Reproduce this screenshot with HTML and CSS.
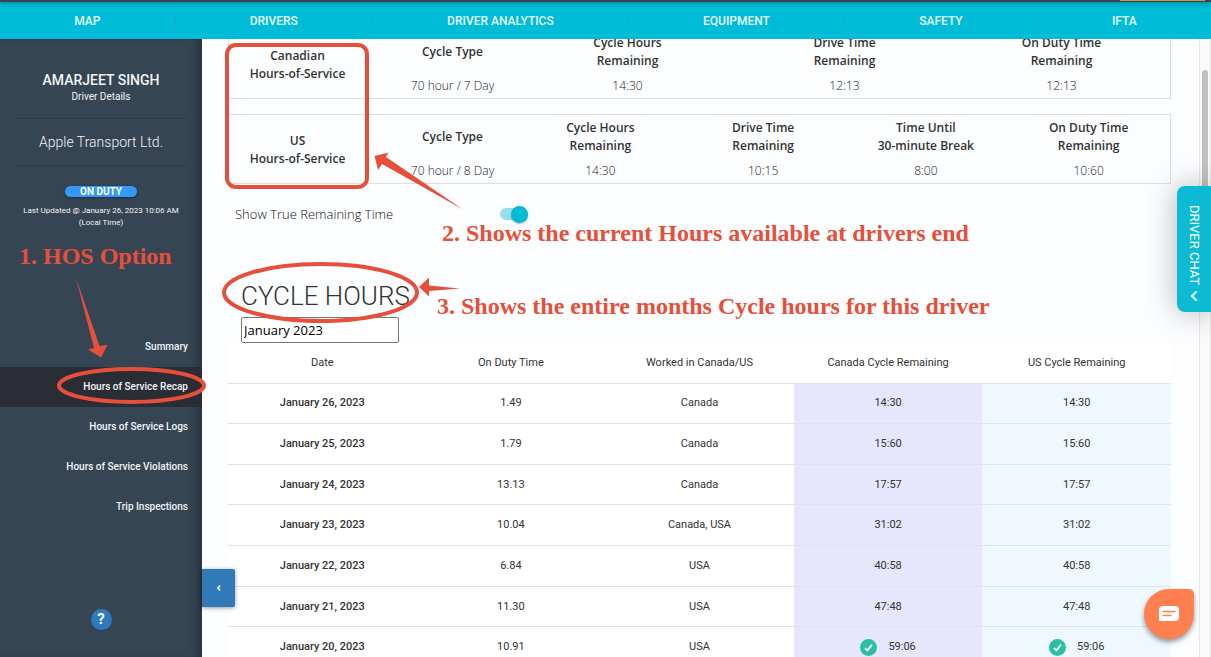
FILE: index.html
```html
<!DOCTYPE html>
<html lang="en">
<head>
<meta charset="utf-8">
<title>Hours of Service Recap</title>
<link rel="stylesheet" href="styles.css">
</head>
<body>
<div class="app">
  <header class="topbar">
    <div class="strip"><span class="strip-tab"></span></div>
    <nav class="topnav" aria-label="Main">
      <a href="#map">MAP</a>
      <a href="#drivers">DRIVERS</a>
      <a href="#analytics">DRIVER ANALYTICS</a>
      <a href="#equipment">EQUIPMENT</a>
      <a href="#safety">SAFETY</a>
      <a href="#ifta">IFTA</a>
    </nav>
  </header>

  <div class="body">
    <aside class="sidebar">
      <div class="driver">
        <h2 class="driver-name">AMARJEET SINGH</h2>
        <a class="driver-link" href="#details">Driver Details</a>
      </div>
      <div class="company">Apple Transport Ltd.</div>
      <div class="status">
        <span class="pill">ON DUTY</span>
        <p class="updated">Last Updated @ January 26, 2023 10:06 AM<br>(Local Time)</p>
      </div>
      <nav class="sidenav" aria-label="Driver">
        <a href="#summary">Summary</a>
        <a class="active" href="#recap">Hours of Service Recap</a>
        <a href="#logs">Hours of Service Logs</a>
        <a href="#violations">Hours of Service Violations</a>
        <a href="#trips">Trip Inspections</a>
      </nav>
      <button class="help" type="button" aria-label="Help">?</button>
      <button class="collapse" type="button" aria-label="Collapse sidebar">
        <svg viewBox="0 0 8 8" width="8" height="8"><path d="M5.2 1.6 2.8 4l2.4 2.4" fill="none" stroke="#fff" stroke-width="1.4"/></svg>
      </button>
    </aside>

    <main class="content">
      <section class="card">
        <h3 class="card-title">Canadian<br>Hours-of-Service</h3>
        <dl class="stat type"><dt>Cycle Type</dt><dd>70 hour / 7 Day</dd></dl>
        <dl class="stat"><dt>Cycle Hours<br>Remaining</dt><dd>14:30</dd></dl>
        <dl class="stat"><dt>Drive Time<br>Remaining</dt><dd>12:13</dd></dl>
        <dl class="stat"><dt>On Duty Time<br>Remaining</dt><dd>12:13</dd></dl>
      </section>
      <section class="card">
        <h3 class="card-title">US<br>Hours-of-Service</h3>
        <dl class="stat type"><dt>Cycle Type</dt><dd>70 hour / 8 Day</dd></dl>
        <dl class="stat"><dt>Cycle Hours<br>Remaining</dt><dd>14:30</dd></dl>
        <dl class="stat"><dt>Drive Time<br>Remaining</dt><dd>10:15</dd></dl>
        <dl class="stat"><dt>Time Until<br>30-minute Break</dt><dd>8:00</dd></dl>
        <dl class="stat"><dt>On Duty Time<br>Remaining</dt><dd>10:60</dd></dl>
      </section>

      <div class="switch-row">
        <label for="true-time">Show True Remaining Time</label>
        <input class="switch" id="true-time" type="checkbox" role="switch" checked>
      </div>

      <h1 class="heading">CYCLE HOURS</h1>
      <input class="month" type="text" value="January 2023" aria-label="Month">

      <table class="cycle">
        <thead>
          <tr><th>Date</th><th>On Duty Time</th><th>Worked in Canada/US</th><th>Canada Cycle Remaining</th><th>US Cycle Remaining</th></tr>
        </thead>
        <tbody>
          <tr><th scope="row">January 26, 2023</th><td>1.49</td><td>Canada</td><td class="ca">14:30</td><td class="us">14:30</td></tr>
          <tr><th scope="row">January 25, 2023</th><td>1.79</td><td>Canada</td><td class="ca">15:60</td><td class="us">15:60</td></tr>
          <tr><th scope="row">January 24, 2023</th><td>13.13</td><td>Canada</td><td class="ca">17:57</td><td class="us">17:57</td></tr>
          <tr><th scope="row">January 23, 2023</th><td>10.04</td><td>Canada, USA</td><td class="ca">31:02</td><td class="us">31:02</td></tr>
          <tr><th scope="row">January 22, 2023</th><td>6.84</td><td>USA</td><td class="ca">40:58</td><td class="us">40:58</td></tr>
          <tr><th scope="row">January 21, 2023</th><td>11.30</td><td>USA</td><td class="ca">47:48</td><td class="us">47:48</td></tr>
          <tr>
            <th scope="row">January 20, 2023</th><td>10.91</td><td>USA</td>
            <td class="ca"><span class="reset"><svg viewBox="0 0 17 17" width="17" height="17"><circle cx="8.5" cy="8.5" r="8.5" fill="#2dbfa5"/><path d="m5 9.2 2.4 2.3L12 5.6" fill="none" stroke="#fff" stroke-width="1.8"/></svg>59:06</span></td>
            <td class="us"><span class="reset"><svg viewBox="0 0 17 17" width="17" height="17"><circle cx="8.5" cy="8.5" r="8.5" fill="#2dbfa5"/><path d="m5 9.2 2.4 2.3L12 5.6" fill="none" stroke="#fff" stroke-width="1.8"/></svg>59:06</span></td>
          </tr>
        </tbody>
      </table>
    </main>
    <div class="scrollbar"><div class="thumb"></div></div>
  </div>

  <button class="driver-chat" type="button">DRIVER CHAT
    <svg viewBox="0 0 10 12" width="10" height="12"><path d="M7.6 1.4 3 6l4.6 4.6" fill="none" stroke="#fff" stroke-width="2"/></svg>
  </button>
  <button class="fab" type="button" aria-label="Open messages">
    <svg viewBox="0 0 20 16" width="20" height="16"><path d="M4 0h12a4 4 0 0 1 4 4v7a4 4 0 0 1-4 4H1a1 1 0 0 1-1-1V4a4 4 0 0 1 4-4Z" fill="#fff"/><path d="M4 5.5h12M4 9.5h8" stroke="#ff7f50" stroke-width="1.6" stroke-linecap="round"/></svg>
  </button>

  <div class="notes">
    <svg class="marks" viewBox="0 0 1211 657" width="1211" height="657" aria-hidden="true">
      <g fill="none" stroke="#e6503a" stroke-width="4">
        <rect x="227" y="45" width="140" height="142" rx="9"/>
        <ellipse cx="320.5" cy="292.5" rx="96.5" ry="28.5"/>
        <ellipse cx="131.5" cy="385.5" rx="72.5" ry="16.5"/>
      </g>
      <g fill="#e6503a">
        <path d="M76 278 99.500 346l8-1L101 357.500l-13-8 6-1.500Z"/>
        <path d="M463 209.500 382 164l-4 6L374.500 156l14-3.500-2.500 4.500Z"/>
        <path d="M460 288.500 429 285.500V277.500L419 287l10 9.500V291Z"/>
      </g>
    </svg>
    <span class="note note-option">1. HOS Option</span>
    <span class="note note-current">2. Shows the current Hours available at drivers end</span>
    <span class="note note-month">3. Shows the entire months Cycle hours for this driver</span>
  </div>
</div>
</body>
</html>
```
FILE: styles.css
```css
* { box-sizing: border-box; }

body {
  margin: 0;
  font-family: Roboto, "Liberation Sans", sans-serif;
  color: #333;
}

h1, h2, h3, p, dl, dd { margin: 0; }
a { color: inherit; text-decoration: none; }
button { border: 0; padding: 0; font: inherit; color: #fff; cursor: pointer; }

.app {
  position: relative;
  display: flex;
  flex-direction: column;
  height: 100vh;
  overflow: hidden;
}

/* Top bar */
.topbar { flex: none; background: #00bcd6; }
.strip {
  display: flex;
  justify-content: flex-end;
  height: 2px;
  padding-right: 6px;
  background: #36454f;
  box-shadow: 0 1px 4px rgba(0, 0, 0, 0.5);
}
.strip-tab { width: 85px; height: 1px; background: #b99a5b; }
.topnav { display: flex; height: 37px; align-items: center; }
.topnav a {
  flex: 1 1 auto;
  border-left: 1px solid #17adc2;
  font-size: 12px;
  font-weight: 500;
  line-height: 18px;
  text-align: center;
  color: #e4f8fb;
}
.topnav a:first-child { border-left: 0; }

.body { display: flex; flex: 1; min-height: 0; }

/* Sidebar */
.sidebar {
  position: relative;
  display: flex;
  flex: none;
  flex-direction: column;
  width: 202px;
  background: #364554;
  box-shadow: inset -8px 0 10px -4px rgba(0, 0, 0, 0.3);
  color: #f2f4f5;
  text-align: center;
}
.driver { margin: 0 16px; padding: 32px 0 14px; border-bottom: 1px solid #2f3c49; }
.driver-name { font-size: 14px; font-weight: 500; line-height: 18px; }
.driver-link { display: block; font-size: 10px; line-height: 15px; }
.company {
  margin: 0 16px;
  padding: 13px 0;
  border-bottom: 1px solid #2f3c49;
  font-size: 14px;
  font-weight: 300;
  line-height: 20px;
}
.status { padding-top: 20px; }
.pill {
  display: block;
  width: 72px;
  margin: 0 auto 8px;
  border-radius: 6px;
  background: #3399fe;
  box-shadow: 0 1px 3px rgba(0, 0, 0, 0.4);
  font-size: 10px;
  font-weight: 700;
  line-height: 11px;
  color: #fff;
}
.updated { font-size: 8px; line-height: 12px; }
.sidenav { display: flex; flex-direction: column; margin-top: 98px; }
.sidenav a {
  padding: 10px 14px;
  font-size: 10px;
  font-weight: 500;
  line-height: 20px;
  text-align: right;
}
.sidenav .active { background: #2a2d36; }
.help {
  width: 21px;
  height: 21px;
  margin: auto auto 27px;
  border-radius: 50%;
  background: #2f7abd;
  font-size: 15px;
  font-weight: 700;
  line-height: 21px;
}
.collapse {
  position: absolute;
  left: 100%;
  bottom: 50px;
  z-index: 1;
  display: grid;
  place-items: center;
  width: 33px;
  height: 38px;
  border-radius: 0 2px 2px 0;
  background: #3279b8;
  box-shadow: 0 1px 4px rgba(0, 0, 0, 0.4);
}

/* Content */
.content {
  flex: 1;
  min-width: 0;
  overflow: hidden;
  padding: 0 28px 0 26px;
  background: #fcfdff;
}
.card {
  display: flex;
  margin-bottom: 15px;
  padding: 4px 0 3px;
  border: 1px solid #dcdee0;
  font-family: "Open Sans", sans-serif;
  font-size: 12px;
  line-height: 18px;
  text-align: center;
}
.card:first-child { margin-top: -10px; }
.card-title {
  align-self: center;
  flex: none;
  width: 137px;
  font-size: 12px;
  font-weight: 600;
}
.stat { flex: 1; }
.type { flex: none; width: 133px; margin-left: 20px; }
.stat dt {
  display: grid;
  place-items: center;
  height: 36px;
  font-weight: 600;
}
.stat dd { padding-top: 7px; font-weight: 300; line-height: 18px; color: #222; }

.switch-row {
  display: flex;
  align-items: center;
  gap: 107px;
  margin: 20px 0 0 7px;
  font-family: "Open Sans", sans-serif;
  font-size: 13px;
  font-weight: 300;
  line-height: 20px;
  color: #111;
}
.switch {
  display: flex;
  align-items: center;
  justify-content: flex-end;
  appearance: none;
  width: 28px;
  height: 12px;
  margin: 0;
  border-radius: 6px;
  background: #99dfea;
}
.switch::before {
  content: "";
  width: 17px;
  height: 17px;
  flex: none;
  border-radius: 50%;
  background: #00bcd6;
  box-shadow: 0 1px 2px rgba(0, 0, 0, 0.3);
}

.heading {
  margin: 54px 0 3px 13px;
  font-size: 26px;
  font-weight: 300;
  line-height: 36px;
  color: #333;
}
.month {
  display: block;
  width: 158px;
  height: 26px;
  margin-left: 13px;
  padding: 0 2px;
  border: 1px solid #777;
  border-radius: 2px;
  background: #fff;
  font-family: "Open Sans", sans-serif;
  font-size: 13px;
  color: #000;
}

.cycle {
  width: 100%;
  height: 325px;
  table-layout: fixed;
  border-collapse: collapse;
  background: #fff;
  font-size: 11px;
  line-height: 16px;
  text-align: center;
}
.cycle tr { height: 40px; border-bottom: 1px solid #e2e3e5; }
.cycle th, .cycle td { padding: 0; font-weight: 400; }
.cycle tbody th { font-weight: 500; }
.ca { background: #e6e6fe; }
.us { background: #eff7ff; }
.reset { display: inline-flex; align-items: center; gap: 11px; vertical-align: middle; }

.scrollbar {
  flex: none;
  width: 12px;
  padding: 31px 2px 0;
  border: solid #e6e6e6;
  border-width: 0 1px;
  background: #fafafa;
}
.thumb { height: 120px; border-radius: 3px; background: #c1c1c1; }

/* Floating controls */
.driver-chat {
  position: absolute;
  top: 186px;
  right: 0;
  display: flex;
  align-items: center;
  justify-content: center;
  gap: 5px;
  width: 34px;
  height: 126px;
  padding-top: 9px;
  border-radius: 8px 0 0 8px;
  background: #0cbad3;
  box-shadow: 0 0 30px rgba(0, 0, 0, 0.3);
  font-size: 13px;
  writing-mode: vertical-rl;
}
.fab {
  position: absolute;
  right: 17px;
  bottom: 18px;
  display: grid;
  place-items: center;
  width: 50px;
  height: 50px;
  border-radius: 50% 5px 50% 50%;
  background: #ff7f50;
  box-shadow: 0 3px 5px rgba(0, 0, 0, 0.4);
}

/* Callouts drawn over the page */
.notes { position: absolute; inset: 0; pointer-events: none; }
.marks { position: absolute; top: 0; left: 0; }
.note {
  position: absolute;
  font-family: "Liberation Serif", serif;
  font-size: 24px;
  font-weight: 700;
  line-height: 28px;
  white-space: nowrap;
  color: #e6503a;
}
.note-option { top: 242px; left: 19px; }
.note-current { top: 219px; left: 442px; }
.note-month { top: 292px; left: 437px; }
```
